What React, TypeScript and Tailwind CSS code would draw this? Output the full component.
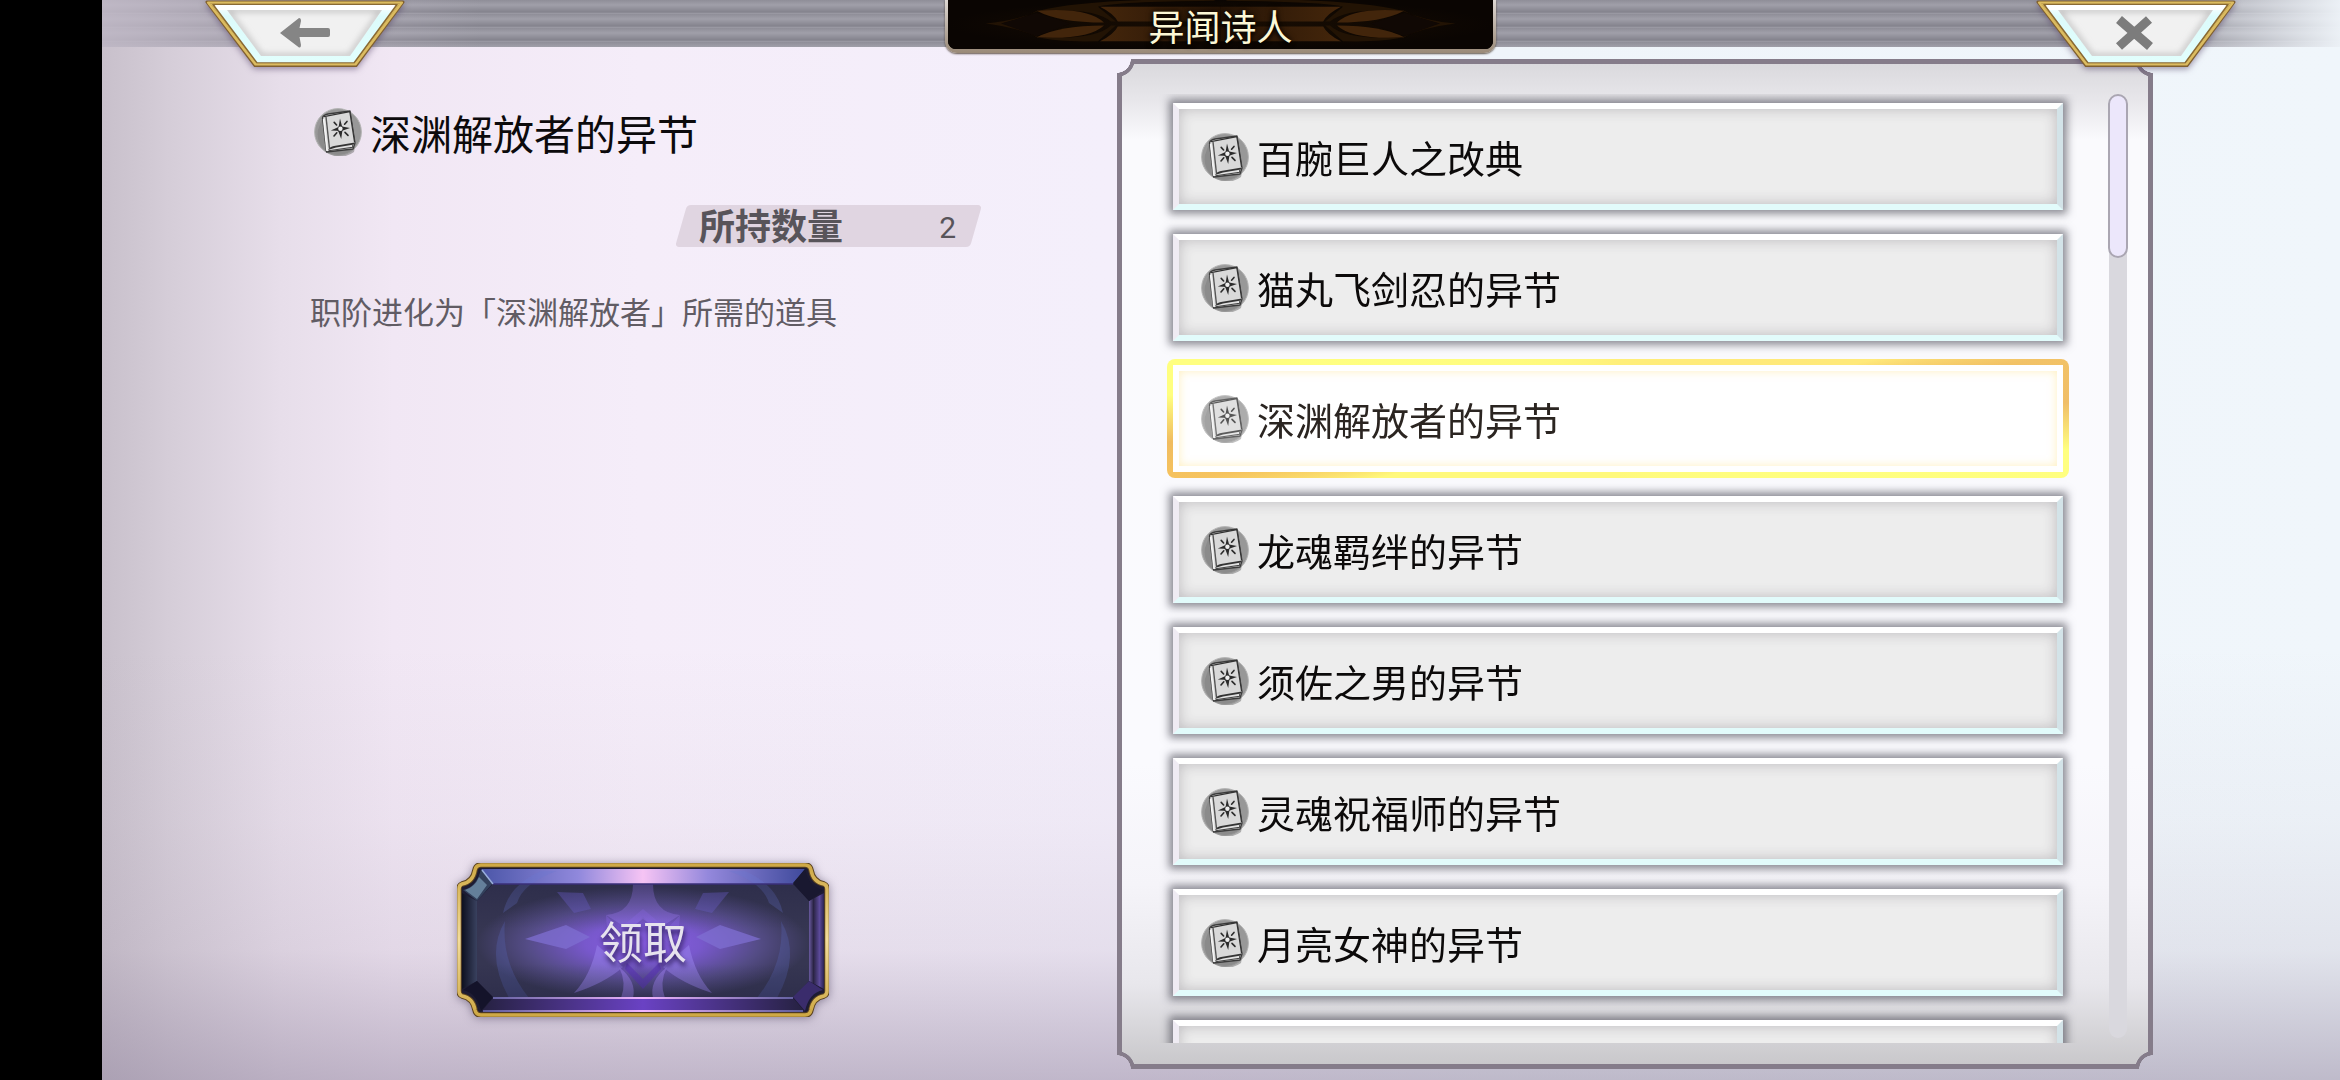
import React, { useState } from "react";

const ITEMS = [
  "百腕巨人之改典",
  "猫丸飞剑忍的异节",
  "深渊解放者的异节",
  "龙魂羁绊的异节",
  "须佐之男的异节",
  "灵魂祝福师的异节",
  "月亮女神的异节",
];

function BookIcon({ className = "" }: { className?: string }) {
  return (
    <svg viewBox="0 0 48 48" className={`size-12 shrink-0 ${className}`} aria-hidden="true">
      <circle cx="24" cy="24" r="23.4" fill="#989898" stroke="#b5b5b5" strokeWidth="1" />
      <path d="M8 11 L12 44 L41 39 L40 44 A23 23 0 0 1 10 42 A24 24 0 0 1 4 22Z" fill="#828282" opacity=".6" />
      <path d="M8.5 10 Q9 7 14 6 L36 3 L41 35 L39 41 L12.5 44 Z" fill="#e2e2e2" stroke="#3c3c3c" strokeWidth="1.3" strokeLinejoin="round" />
      <path d="M13 9 L36 4 L40.8 35 L19 38.5 Q15 39.5 13.5 43 Z" fill="#d9d9d9" />
      <path d="M12 9 L15.5 40.5" stroke="#555" strokeWidth="1.4" fill="none" />
      <path d="M9.600 11 L13 43" stroke="#f4f4f4" strokeWidth="1.6" fill="none" />
      <path d="M14 42 Q16 38.5 20 38 L40.8 34.6 L40 36.4 L22 39.6 Z" fill="#333" />
      <path d="M14.5 42.8 L38.6 39.2 L38.8 36.9" stroke="#444" strokeWidth="1.1" fill="none" />
      <path d="M10 8.6 L35.8 3.6 L40.6 34.4" stroke="#333" strokeWidth="1.2" fill="none" strokeLinejoin="round" />
      <path
        d="M26 10.500 L27.9 17.800 Q28.4 18.700 29.4 18.800 L36 20 L29.6 22.2 Q28.4 22.600 28.2 23.8 L27.2 31 L24.6 24 Q24.2 23 23.2 22.8 L16.800 22.4 L23.4 19.4 Q24.6 19 24.8 18Z"
        fill="#2b2b2b"
      />
      <circle cx="26.4" cy="20.8" r="2.2" fill="#eee" />
      <path d="M20.2 14.4 L22.6 17 M33 13.4 L30.6 16.2 M20 28 L22.8 24.8 M31 24.4 L34 27.4" stroke="#2b2b2b" strokeWidth="1.6" strokeLinecap="round" />
    </svg>
  );
}

function CornerButton({ label, children }: { label: string; children: React.ReactNode }) {
  return (
    <button type="button" aria-label={label} className="h-[70px] w-[202px] shrink-0 cursor-pointer drop-shadow-[0_2px_3px_rgba(70,50,90,0.5)]">
      <svg viewBox="0 0 202 70" className="h-full w-full" aria-hidden="true">
        <defs>
          <linearGradient id="cb-rim" x1="0" y1="0" x2="0" y2="1">
            <stop offset="0" stopColor="#ffffff" />
            <stop offset=".2" stopColor="#dcfbfb" />
            <stop offset="1" stopColor="#e2fffd" />
          </linearGradient>
          <filter id="cb-soft" x="-10%" y="-10%" width="120%" height="120%">
            <feGaussianBlur stdDeviation="3" />
          </filter>
          <clipPath id="cb-clip">
            <path d="M23 10 H178 L146 56 H57Z" />
          </clipPath>
        </defs>
        <path d="M3 2 H199 L152 65.500 H51Z" fill="#d9b95c" stroke="#80602f" strokeWidth="3" strokeLinejoin="round" />
        <path d="M9 4.500 H193 L150 63 H53Z" fill="url(#cb-rim)" stroke="#8a6a34" strokeWidth="1.500" strokeLinejoin="round" />
        <path d="M4 2.500 H198 L151.500 64.500 H51.500Z" fill="none" stroke="#dcbc60" strokeWidth="2.200" strokeLinejoin="round" />
        <path d="M11 5 H191 L187 10 H15Z" fill="#fff" />
        <path d="M23 10 H178 L146 56 H57Z" fill="#f1f1f1" />
        <path d="M23 10 H178 L146 56 H57Z" fill="none" stroke="#b9b9b9" strokeWidth="4" filter="url(#cb-soft)" clipPath="url(#cb-clip)" />
        {children}
      </svg>
    </button>
  );
}

function TitleOrnament() {
  const half = (
    <g>
      <path d="M38 25 Q70 22 92 12 Q140 0 270 0 V2 Q170 3 152 8 L170 23 H165 Q150 9 90 12 Q76 20 54 25 Q76 30 90 39 Q150 42 165 27 H170 L152 43 Q110 44 92 39 Q70 29 38 25Z" fill="#221304" />
      <path d="M154 8 H276 V23 H172 Q168 15 154 8Z" fill="url(#to-brown)" />
      <path d="M172 28 H276 V43 H154 Q168 36 172 28Z" fill="url(#to-brown)" />
      <path d="M158 24 Q142 8 90 12 Q112 24 158 24Z" fill="#42250b" />
      <path d="M158 27 Q142 42 90 39 Q112 27 158 27Z" fill="#42250b" />
      <path d="M54 25 L90 14 L124 25 L90 38Z" fill="#100804" />
    </g>
  );
  return (
    <svg viewBox="0 0 552 52" preserveAspectRatio="xMidYMid slice" className="absolute inset-0 h-full w-full" aria-hidden="true">
      <defs>
        <linearGradient id="to-brown" x1="0" y1="0" x2="1" y2="0">
          <stop offset="0" stopColor="#44260b" />
          <stop offset="1" stopColor="#261406" />
        </linearGradient>
        <radialGradient id="to-glow">
          <stop offset="0" stopColor="#1a0e03" />
          <stop offset="1" stopColor="#0a0502" />
        </radialGradient>
      </defs>
      <rect width="552" height="52" fill="url(#to-glow)" />
      {half}
      <g transform="translate(552 0) scale(-1 1)">{half}</g>
    </svg>
  );
}

function ClaimArt() {
  const frame =
    "M24 2 H348 Q353 2 354 7 Q356 19 367 21 Q370 22 370 26 V128 Q370 132 367 133 Q356 135 354 147 Q353 152 348 152 H24 Q19 152 18 147 Q16 135 5 133 Q2 132 2 128 V26 Q2 22 5 21 Q16 19 18 7 Q19 2 24 2Z";
  const half = (
    <g>
      <path d="M68 76 L109 62 L133 74 L109 86Z" fill="#7f6fd2" opacity=".75" />
      <path d="M100 29 L126 30 L134 46 L117 50Z" fill="#6a5cc0" opacity=".55" />
      <path d="M48 58 Q28 92 52 135 H72 Q44 100 48 58Z" fill="#5a68b8" opacity=".3" />
      <path d="M46 50 Q52 22 84 8 L100 8 Q66 20 60 40Z" fill="#6a78d0" opacity=".3" />
      <path d="M176 21 H186 V56 Q176 64 168 64 L149 52 Q176 50 176 21Z" fill="#9a7af0" opacity=".4" />
      <path d="M149 52 L162 66 L186 46 V54 L160 82 Q150 78 149 52Z" fill="#8f6ce8" opacity=".4" />
      <path d="M140 82 L166 104 Q148 120 117 130 Q134 112 140 82Z" fill="#9a84ee" opacity=".5" />
      <path d="M162 104 Q180 118 176 135 H164 Q170 120 162 104Z" fill="#a184f4" opacity=".5" />
      <path d="M170 100 L186 116 V126 L168 106Z" fill="#5a34b8" opacity=".6" />
    </g>
  );
  return (
    <svg viewBox="0 0 372 154" className="absolute inset-0 h-full w-full" aria-hidden="true">
      <defs>
        <radialGradient id="ca-face" cx=".5" cy=".52" r=".5">
          <stop offset="0" stopColor="#8a5ee4" />
          <stop offset=".35" stopColor="#7858cc" />
          <stop offset=".7" stopColor="#544c86" />
          <stop offset="1" stopColor="#363652" />
        </radialGradient>
        <linearGradient id="ca-shade" x1="0" y1="0" x2="0" y2="1">
          <stop offset="0" stopColor="#1c1c3c" stopOpacity=".3" />
          <stop offset=".4" stopColor="#1c1c3c" stopOpacity="0" />
          <stop offset=".7" stopColor="#1c1c3c" stopOpacity="0" />
          <stop offset="1" stopColor="#1c1c3c" stopOpacity=".3" />
        </linearGradient>
        <linearGradient id="ca-top">
          <stop offset="0" stopColor="#4b56a8" />
          <stop offset=".3" stopColor="#9088dc" />
          <stop offset=".5" stopColor="#f6c4f4" />
          <stop offset=".7" stopColor="#9488dc" />
          <stop offset="1" stopColor="#3f4a9c" />
        </linearGradient>
        <linearGradient id="ca-bottom">
          <stop offset="0" stopColor="#252140" />
          <stop offset=".5" stopColor="#6a42c4" />
          <stop offset="1" stopColor="#252140" />
        </linearGradient>
        <linearGradient id="ca-line" gradientUnits="userSpaceOnUse" x1="26" y1="0" x2="346" y2="0">
          <stop offset="0" stopColor="#5c5c9c" />
          <stop offset=".5" stopColor="#f0b4ff" />
          <stop offset="1" stopColor="#5c5c9c" />
        </linearGradient>
        <linearGradient id="ca-left">
          <stop offset="0" stopColor="#0e1020" />
          <stop offset="1" stopColor="#39415f" />
        </linearGradient>
        <linearGradient id="ca-right">
          <stop offset="0" stopColor="#6a5aa0" />
          <stop offset=".3" stopColor="#2a2444" />
          <stop offset=".7" stopColor="#5c4a9a" />
          <stop offset="1" stopColor="#2a2350" />
        </linearGradient>
        <linearGradient id="ca-gold" x1="0" y1="0" x2="0" y2="1">
          <stop offset="0" stopColor="#cfa945" />
          <stop offset=".5" stopColor="#f3dc9a" />
          <stop offset="1" stopColor="#cfa945" />
        </linearGradient>
      </defs>
      <path d={frame} fill="#1d1b33" />
      <path d="M24 6 H348 L336 21 H36Z" fill="url(#ca-top)" />
      <path d="M36 135 H336 L348 149 H24Z" fill="url(#ca-bottom)" />
      <path d="M5 30 L20 38 V118 L5 126Z" fill="url(#ca-left)" />
      <path d="M352 38 L367 30 V126 L352 118Z" fill="url(#ca-right)" />
      <path d="M36 21 H336 L352 38 V118 L336 135 H36 L20 118 V38Z" fill="url(#ca-face)" />
      {half}
      <g transform="translate(372 0) scale(-1 1)">{half}</g>
      <path d="M36 21 H336 L352 38 V118 L336 135 H36 L20 118 V38Z" fill="url(#ca-shade)" />
      <path d="M24 6 L36 20 L20 38 L6 27 Q20 24 24 6Z" fill="#33405c" />
      <path d="M8 27 Q18 24 22 14 L30 22 L20 36Z" fill="#6d8ba4" opacity=".85" />
      <path d="M348 6 L336 20 L352 38 L366 27 Q352 24 348 6Z" fill="#191830" />
      <path d="M24 148 L36 134 L20 118 L6 127 Q20 130 24 148Z" fill="#14132a" />
      <path d="M348 148 L336 134 L352 118 L366 127 Q352 130 348 148Z" fill="#3a2c6c" />
      <path d="M36 21 H336" stroke="#3a2f78" strokeWidth="1.500" />
      <path d="M36 134 H336 V136 H36Z" fill="url(#ca-line)" />
      <path d="M26 147 H346 V149 H26Z" fill="url(#ca-line)" />
      <path d="M25 7 L36 21" stroke="#9aaede" strokeWidth="1.500" />
      <path d={frame} fill="none" stroke="#5d4420" strokeWidth="5.500" />
      <path d={frame} fill="none" stroke="url(#ca-gold)" strokeWidth="3.500" />
    </svg>
  );
}

function ListItem({ name, selected, onSelect }: { name: string; selected: boolean; onSelect: () => void }) {
  if (selected) {
    return (
      <li className="-m-[6px] rounded-lg bg-[conic-gradient(#ffef7a_0deg,#ffe97a_77deg,#f2c266_82deg,#f0be68_88deg,#ffff80_94deg,#fff97c_180deg,#fff97c_256deg,#f6c35e_262deg,#f0bc60_267deg,#ffff80_273deg,#ffff80_279deg,#ffef7a_360deg)] p-[6px]">
        <button
          type="button"
          aria-pressed="true"
          onClick={onSelect}
          className="flex h-[107px] w-full cursor-pointer items-center gap-2 border-[6px] border-white bg-white pl-[22px] text-left text-[38px] leading-[56px] text-[#2b2521] shadow-[inset_0_0_10px_rgba(255,225,130,0.5)]"
        >
          <BookIcon className="opacity-80" />
          <span>{name}</span>
        </button>
      </li>
    );
  }
  return (
    <li>
      <button
        type="button"
        aria-pressed="false"
        onClick={onSelect}
        className="flex h-[107px] w-full cursor-pointer items-center gap-2 border-[6px] border-t-white border-r-[#d3e3e8] border-b-[#e2fbfb] border-l-[#efebf3] bg-[#ededed] pl-[22px] text-left text-[38px] leading-[56px] text-[#0c0a0a] shadow-[0_0_8px_4px_rgba(70,70,82,0.6),inset_0_0_14px_rgba(60,55,65,0.28)]"
      >
        <BookIcon />
        <span>{name}</span>
      </button>
    </li>
  );
}

export default function App() {
  const [selected, setSelected] = useState(2);

  return (
    <div className="flex h-screen overflow-hidden bg-black pl-[102px] font-['Noto_Sans_CJK_SC',sans-serif]">
      <div className="flex min-w-0 flex-1 flex-col bg-[linear-gradient(to_bottom,rgba(150,135,160,0)_60%,rgba(150,135,160,0.06)_76%,rgba(150,135,160,0.16)_88%,rgba(145,132,158,0.52)_100%),linear-gradient(to_right,#c8c0cb_0,#d5cdd8_3%,#e7deea_8%,#f1e7f4_13%,#f5edf9_24%,#f4effb_45%,#eff4fa_62%,#f0f6fb_100%)]">
        <header className="relative z-10 flex h-[47px] shrink-0 items-start justify-between bg-[linear-gradient(to_right,rgba(196,188,202,0.85)_0,rgba(196,188,202,0)_17%,rgba(240,245,250,0)_91%,rgba(240,245,250,0.95)_100%),repeating-linear-gradient(to_bottom,#8f8e98_0,#a09fa9_5px,#84838d_12px,#a09fa9_14px)] pr-[103px] pl-[102px]">
          <CornerButton label="返回">
            <path d="M76 33 L95 18 Q97 18 97 21 L95.500 28 H124 Q126 28 126 30 V35 Q126 37 124 37 H95.500 L97 45 Q97 48 95 47.500Z" fill="#858585" />
          </CornerButton>
          <div className="h-[53px] w-[551px] rounded-b-xl bg-linear-to-b from-[#ded8d4] to-[#9a8a78] px-[3px] pb-[4px] shadow-[0_1px_2px_rgba(60,45,30,0.8)]">
            <div className="relative flex h-full items-center justify-center rounded-b-lg bg-[#0a0502] shadow-[inset_0_0_10px_#000]">
              <div className="absolute inset-0 overflow-hidden rounded-b-lg">
                <TitleOrnament />
              </div>
              <h1 className="relative text-[36px] leading-[40px] text-[#fcf8d6] [text-shadow:0_0_6px_#000,0_2px_4px_#000]">异闻诗人</h1>
            </div>
          </div>
          <CornerButton label="关闭">
            <path d="M84 19.500 L115 46.500 M114 19.500 L84 46.500" stroke="#7c7c7c" strokeWidth="9" />
          </CornerButton>
        </header>

        <main className="grid min-h-0 flex-1 grid-cols-[1015fr_1036fr_187fr]">
          <section className="flex flex-col items-start pt-[56px] pr-[135px] pb-[63px] pl-[208px]">
            <div className="flex items-center gap-2 pl-1">
              <BookIcon />
              <h2 className="text-[41px] leading-[58px] text-[#0c0a0c]">深渊解放者的异节</h2>
            </div>
            <div className="relative mt-11 flex h-[42px] w-[307px] items-center justify-between self-end pr-[26px] pl-[24px] before:absolute before:inset-x-[6px] before:inset-y-0 before:-skew-x-[16deg] before:rounded before:bg-[#e0d5e1]">
              <span className="relative pb-1 text-[36px] leading-[42px] font-bold text-[#58545a]">所持数量</span>
              <span className="relative pt-1 font-[Roboto,sans-serif] text-[30px] leading-[46px] text-[#58545a]">2</span>
            </div>
            <p className="mt-11 text-[31px] leading-[40px] text-[#615c64]">职阶进化为「深渊解放者」所需的道具</p>
            <button
              type="button"
              className="relative mt-auto ml-[147px] flex h-[154px] w-[372px] cursor-pointer items-center justify-center drop-shadow-[0_1px_5px_rgba(60,50,80,0.5)]"
            >
              <ClaimArt />
              <span className="relative text-[44px] leading-[60px] text-[#e6e2ee] [text-shadow:1px_4px_5px_rgba(20,10,50,0.8)]">领取</span>
            </button>
          </section>

          <section
            aria-label="道具列表"
            className="mt-3 mb-[11px] flex min-h-0 bg-[#857c8a] p-[5px] [mask-composite:intersect] [mask-image:radial-gradient(circle_14px_at_0_0,transparent_97%,#000),radial-gradient(circle_14px_at_100%_0,transparent_97%,#000),radial-gradient(circle_14px_at_0_100%,transparent_97%,#000),radial-gradient(circle_14px_at_100%_100%,transparent_97%,#000)]"
          >
            <div className="flex min-h-0 min-w-0 flex-1 gap-[31px] bg-[linear-gradient(to_bottom,#dad9dd_0,#e9e8ec_40px,#fafafd_75px,#fafafe_70%,#f5f4f9_82%,#e8e7ec_92%,#c9c8cb_100%)] pt-[30px] pr-[20px] pb-[21px] pl-[37px] [mask-composite:intersect] [mask-image:radial-gradient(circle_18px_at_-5px_-5px,transparent_97%,#000),radial-gradient(circle_18px_at_calc(100%+5px)_-5px,transparent_97%,#000),radial-gradient(circle_18px_at_-5px_calc(100%+5px),transparent_97%,#000),radial-gradient(circle_18px_at_calc(100%+5px)_calc(100%+5px),transparent_97%,#000)]">
              <ul id="item-list" className="flex min-w-0 flex-1 flex-col gap-6 overflow-hidden px-[14px] pt-[9px]">
                {ITEMS.map((name, i) => (
                  <ListItem key={name} name={name} selected={i === selected} onSelect={() => setSelected(i)} />
                ))}
                <li
                  aria-hidden="true"
                  className="h-[107px] shrink-0 border-[6px] border-t-white border-r-[#d3e3e8] border-b-[#e2fbfb] border-l-[#efebf3] bg-[#ededed] shadow-[0_0_8px_4px_rgba(70,70,82,0.6),inset_0_0_14px_rgba(60,55,65,0.28)]"
                />
              </ul>
              <div role="scrollbar" aria-label="滚动" aria-controls="item-list" aria-valuenow={0} className="mb-[5px] flex w-5 flex-col items-center">
                <div className="relative h-[164px] w-full shrink-0 rounded-full border-2 border-[#aaa6b2] bg-[#ece7fb]" />
                <div className="-mt-3 w-[18px] flex-1 rounded-b-full bg-[#d9d8de]" />
              </div>
            </div>
          </section>
        </main>
      </div>
    </div>
  );
}
